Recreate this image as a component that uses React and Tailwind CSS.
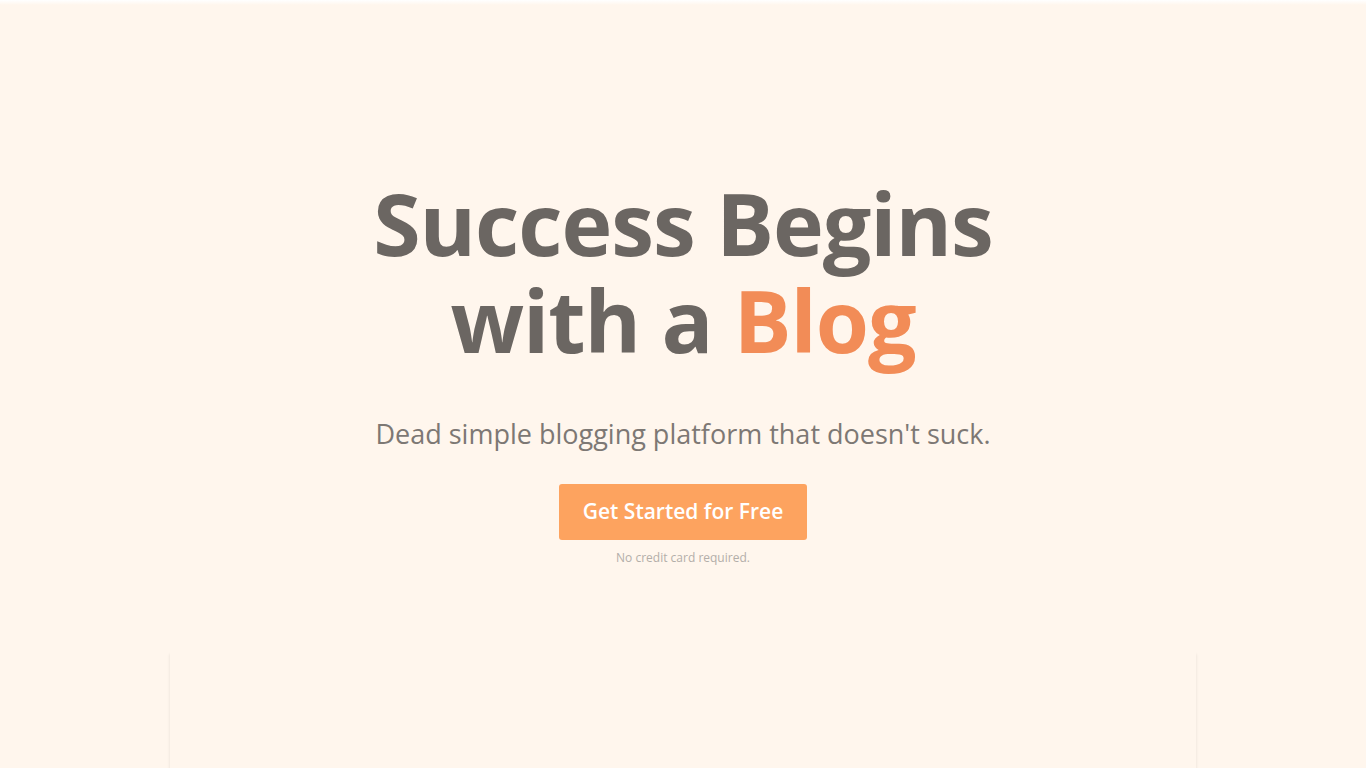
import React from "react";

const font = { fontFamily: '"Open Sans", "Noto Sans", sans-serif' };

export default function App() {
  return (
    <div className="h-screen bg-[#fff6ed] overflow-hidden" style={font}>
      <div className="h-[5px] bg-gradient-to-b from-white to-[#fff6ed]" />
      <section className="flex flex-col items-center pt-[169px] text-center">
        <h1 className="text-[86px] leading-[97px] font-bold tracking-[-1px] text-[#6b6662]">
          Success Begins
          <br />
          with a <span className="text-[#f28c57]">Blog</span>
        </h1>
        <p className="mt-[48px] text-[27px] leading-[36px] text-[#7d7874]">
          Dead simple blogging platform that doesn't suck.
        </p>
        <a
          href="#"
          className="mt-[32px] flex h-[56px] w-[248px] items-center justify-center rounded-[3px] bg-[#fda35f] text-[21px] font-semibold text-white"
        >
          Get Started for Free
        </a>
        <div className="mt-[9px] text-[12px] text-[#b3aea9]">
          No credit card required.
        </div>
      </section>
      <div className="mx-auto mt-[84px] h-[200px] w-[1026px] bg-[#fff6ed] shadow-[0_3px_3px_rgba(0,0,0,0.1)]" />
    </div>
  );
}
